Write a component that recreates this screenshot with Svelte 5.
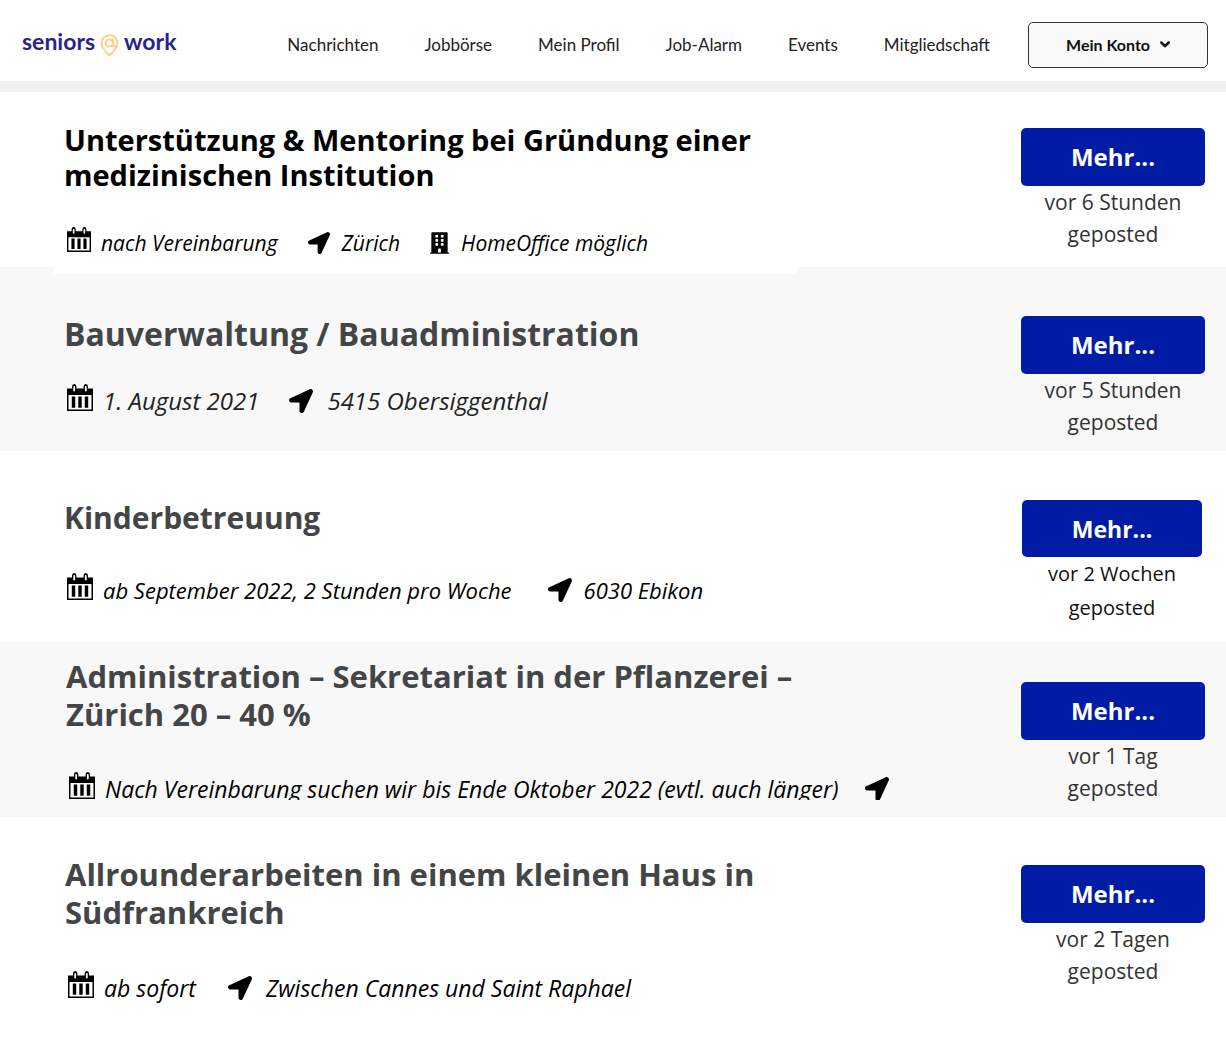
<script lang="ts">
  type Meta = { icon: "calendar" | "arrow" | "building"; text: string };
  type Job = { name: string; title: string; meta: Meta[]; posted: string };

  const links = ["Nachrichten", "Jobbörse", "Mein Profil", "Job-Alarm", "Events", "Mitgliedschaft"];

  const jobs: Job[] = [
    {
      name: "mentoring",
      title: "Unterstützung & Mentoring bei Gründung einer medizinischen Institution",
      meta: [
        { icon: "calendar", text: "nach Vereinbarung" },
        { icon: "arrow", text: "Zürich" },
        { icon: "building", text: "HomeOffice möglich" },
      ],
      posted: "vor 6 Stunden",
    },
    {
      name: "building",
      title: "Bauverwaltung / Bauadministration",
      meta: [
        { icon: "calendar", text: "1. August 2021" },
        { icon: "arrow", text: "5415 Obersiggenthal" },
      ],
      posted: "vor 5 Stunden",
    },
    {
      name: "childcare",
      title: "Kinderbetreuung",
      meta: [
        { icon: "calendar", text: "ab September 2022, 2 Stunden pro Woche" },
        { icon: "arrow", text: "6030 Ebikon" },
      ],
      posted: "vor 2 Wochen",
    },
    {
      name: "office",
      title: "Administration – Sekretariat in der Pflanzerei – Zürich 20 – 40 %",
      meta: [
        { icon: "calendar", text: "Nach Vereinbarung suchen wir bis Ende Oktober 2022 (evtl. auch länger)" },
        { icon: "arrow", text: "" },
      ],
      posted: "vor 1 Tag",
    },
    {
      name: "allround",
      title: "Allrounderarbeiten in einem kleinen Haus in Südfrankreich",
      meta: [
        { icon: "calendar", text: "ab sofort" },
        { icon: "arrow", text: "Zwischen Cannes und Saint Raphael" },
      ],
      posted: "vor 2 Tagen",
    },
  ];
</script>

<header>
  <a class="logo" href="/" aria-label="seniors@work">
    <span>seniors</span>
    <svg width="19" height="25" viewBox="0 0 19 25" fill="none" stroke="#fbd08c" stroke-width="2">
      <path d="M4.500 16.500A8 8 0 1 1 17.500 10C17.500 15 13.500 18.500 9.500 22.500L5.500 18.800" stroke-linecap="round" stroke-linejoin="round" />
      <circle cx="9.300" cy="10" r="3.600" />
      <path d="M13 6.500V11.500Q13.500 14 15.500 13" stroke-linecap="round" />
    </svg>
    <span>work</span>
  </a>
  <nav>
    {#each links as link}
      <a href="/">{link}</a>
    {/each}
  </nav>
  <button class="account">
    Mein Konto
    <svg width="10" height="7" viewBox="0 0 10 7" fill="none" stroke="#111" stroke-width="2.500">
      <path d="M1.300 1.500L5 5.200L8.700 1.500" stroke-linecap="round" stroke-linejoin="round" />
    </svg>
  </button>
</header>

<main>
  {#each jobs as job}
    <article class={job.name}>
      <div class="info">
        <h2>{job.title}</h2>
        <div class="meta">
          {#each job.meta as item}
            <span class="item">
              {#if item.icon === "calendar"}
                <svg class="calendar" viewBox="0 0 26 27">
                  <path fill-rule="evenodd" d="M0 4.500H5V2.500Q5 0 7.200 0T9.400 2.500V4.500H16.600V2.500Q16.600 0 18.800 0T21 2.500V4.500H26V27H0ZM1.500 11V25.500H24.500V11Z" />
                  <path d="M7.200 2.800V6.500M18.800 2.800V6.500" stroke="#fff" stroke-width="1.800" stroke-linecap="round" />
                  <path d="M4.800 12.500H8.200V23.800H4.800ZM11.300 12.500H14.700V23.800H11.300ZM17.800 12.500H21.200V23.800H17.800Z" />
                </svg>
              {:else if item.icon === "arrow"}
                <svg class="arrow" viewBox="0 0 512 512">
                  <path d="M444.5 3.5L28.7 195.4c-48 22.400-32 92.800 19.200 92.800h175.900v175.900c0 51.200 70.400 67.200 92.800 19.200L508.500 67.500c16-38.400-25.600-80-64-64z" />
                </svg>
              {:else}
                <svg class="office-icon" viewBox="0 0 448 512">
                  <path d="M436 480h-20V24c0-13.300-10.700-24-24-24H56C42.700 0 32 10.700 32 24v456H12c-6.600 0-12 5.400-12 12v20h448v-20c0-6.600-5.400-12-12-12zM128 76c0-6.600 5.400-12 12-12h40c6.600 0 12 5.400 12 12v40c0 6.600-5.400 12-12 12h-40c-6.600 0-12-5.400-12-12V76zm0 96c0-6.600 5.400-12 12-12h40c6.600 0 12 5.400 12 12v40c0 6.600-5.400 12-12 12h-40c-6.600 0-12-5.400-12-12v-40zm52 148h-40c-6.600 0-12-5.400-12-12v-40c0-6.600 5.400-12 12-12h40c6.600 0 12 5.400 12 12v40c0 6.600-5.400 12-12 12zm76 160h-64v-84c0-6.600 5.400-12 12-12h40c6.600 0 12 5.400 12 12v84zm64-172c0 6.600-5.400 12-12 12h-40c-6.600 0-12-5.400-12-12v-40c0-6.600 5.400-12 12-12h40c6.600 0 12 5.400 12 12v40zm0-96c0 6.600-5.400 12-12 12h-40c-6.600 0-12-5.400-12-12v-40c0-6.600 5.400-12 12-12h40c6.600 0 12 5.400 12 12v40zm0-96c0 6.600-5.400 12-12 12h-40c-6.600 0-12-5.400-12-12V76c0-6.600 5.400-12 12-12h40c6.600 0 12 5.400 12 12v40z" />
                </svg>
              {/if}
              {#if item.text}<em>{item.text}</em>{/if}
            </span>
          {/each}
        </div>
      </div>
      <div class="action">
        <button>Mehr...</button>
        <p>{job.posted}<br />geposted</p>
      </div>
    </article>
  {/each}
</main>

<style>
  :global(body) {
    margin: 0;
    background: #fff;
    font-family: "Open Sans", "Noto Sans", sans-serif;
  }

  header {
    display: flex;
    align-items: center;
    box-sizing: border-box;
    height: 92px;
    padding: 8px 18px 0 22px;
    border-bottom: 11px solid #f0f0f0;
    font-family: Lato, sans-serif;
  }

  .logo {
    display: flex;
    align-items: center;
    gap: 5px;
    margin-bottom: 8px;
    color: #29248a;
    font-size: 23px;
    line-height: 28px;
    font-weight: 700;
    text-decoration: none;
  }
  .logo svg {
    margin-top: 10px;
  }

  nav {
    display: flex;
    gap: 46px;
    margin-left: auto;
  }
  nav a {
    color: #222;
    font-size: 17px;
    line-height: 24px;
    text-decoration: none;
    white-space: nowrap;
  }

  .account {
    display: flex;
    align-items: center;
    justify-content: center;
    gap: 10px;
    width: 180px;
    height: 46px;
    margin-left: 38px;
    padding: 0;
    border: 1px solid #333;
    border-radius: 5px;
    background: #f9f9f9;
    color: #111;
    font: 700 16px/24px Lato, sans-serif;
    cursor: pointer;
  }

  article {
    display: flex;
    justify-content: space-between;
    align-items: flex-start;
    box-sizing: border-box;
    min-height: 184px;
    padding-right: 21px;
    padding-left: 54px;
  }
  article:nth-child(even) {
    background: #f8f8f8;
  }

  .info {
    box-sizing: border-box;
    padding-left: 10px;
  }

  h2 {
    max-width: 733px;
    margin: 0;
    color: #434547;
    font-size: 31px;
    line-height: 38px;
    font-weight: 700;
  }

  .meta {
    display: flex;
    align-items: flex-start;
    gap: 30px;
    margin-top: 38px;
    padding-left: 3px;
    font-size: 23px;
    line-height: 34px;
    white-space: nowrap;
  }
  .item {
    display: flex;
    align-items: center;
    gap: 12px;
    height: 34px;
  }
  .item svg {
    flex: none;
  }
  .calendar {
    width: 26px;
    height: 27px;
    margin-right: -2px;
    margin-bottom: 8px;
  }
  .arrow {
    width: 24px;
    height: 24px;
  }
  .office-icon {
    width: 19px;
    height: 22px;
  }

  .action {
    flex: none;
    width: 184px;
    margin-top: 48px;
    text-align: center;
  }
  .action button {
    width: 100%;
    height: 58px;
    padding: 0;
    border: 0;
    border-radius: 5px;
    background: #001ca5;
    color: #fff;
    font: 700 24px/32px "Open Sans", sans-serif;
    cursor: pointer;
  }
  .action p {
    margin: 0;
    color: #333;
    font-size: 21px;
    line-height: 32px;
  }

  .mentoring {
    height: 175px;
    min-height: 0;
  }
  .mentoring .info {
    position: relative;
    width: 743px;
    padding-top: 30px;
    padding-bottom: 14px;
    background: #fff;
  }
  .mentoring h2 {
    color: #000;
    font-size: 29px;
    line-height: 35px;
  }
  .mentoring .meta {
    margin-top: 34px;
    font-size: 21px;
  }
  .mentoring .calendar {
    width: 24px;
    height: 25px;
  }
  .mentoring .arrow {
    width: 22px;
    height: 22px;
  }
  .mentoring .action {
    margin-top: 36px;
  }

  .building .info,
  .childcare .info {
    padding-top: 48px;
  }
  .building .action,
  .childcare .action {
    margin-top: 49px;
  }
  .building h2 {
    font-size: 32px;
  }
  .building .meta {
    margin-top: 31px;
    color: #222;
    font-size: 24px;
  }
  .building .arrow {
    margin-right: 2px;
  }

  .childcare {
    min-height: 191px;
    padding-right: 24px;
  }
  .childcare h2 {
    font-size: 30px;
  }
  .childcare .meta {
    gap: 36px;
    margin-top: 36px;
    font-size: 22px;
  }
  .childcare .action {
    width: 180px;
  }
  .childcare .action button {
    height: 57px;
    font-size: 23px;
  }
  .childcare .action p {
    color: #111;
    font-size: 20px;
    line-height: 34px;
  }

  .office {
    min-height: 175px;
  }
  .office .info {
    padding-top: 15px;
    padding-left: 12px;
  }
  /* long dates run up to the edge of the row and get cut there */
  .office .meta {
    gap: 26px;
    height: 28px;
    margin-top: 39px;
    overflow: hidden;
  }
  .office .action {
    margin-top: 40px;
  }

  .allround {
    min-height: 223px;
  }
  .allround .info {
    padding-top: 38px;
    padding-left: 11px;
  }
  .allround .meta {
    gap: 32px;
    margin-top: 40px;
  }
  .allround .arrow {
    margin-right: 2px;
  }
</style>
